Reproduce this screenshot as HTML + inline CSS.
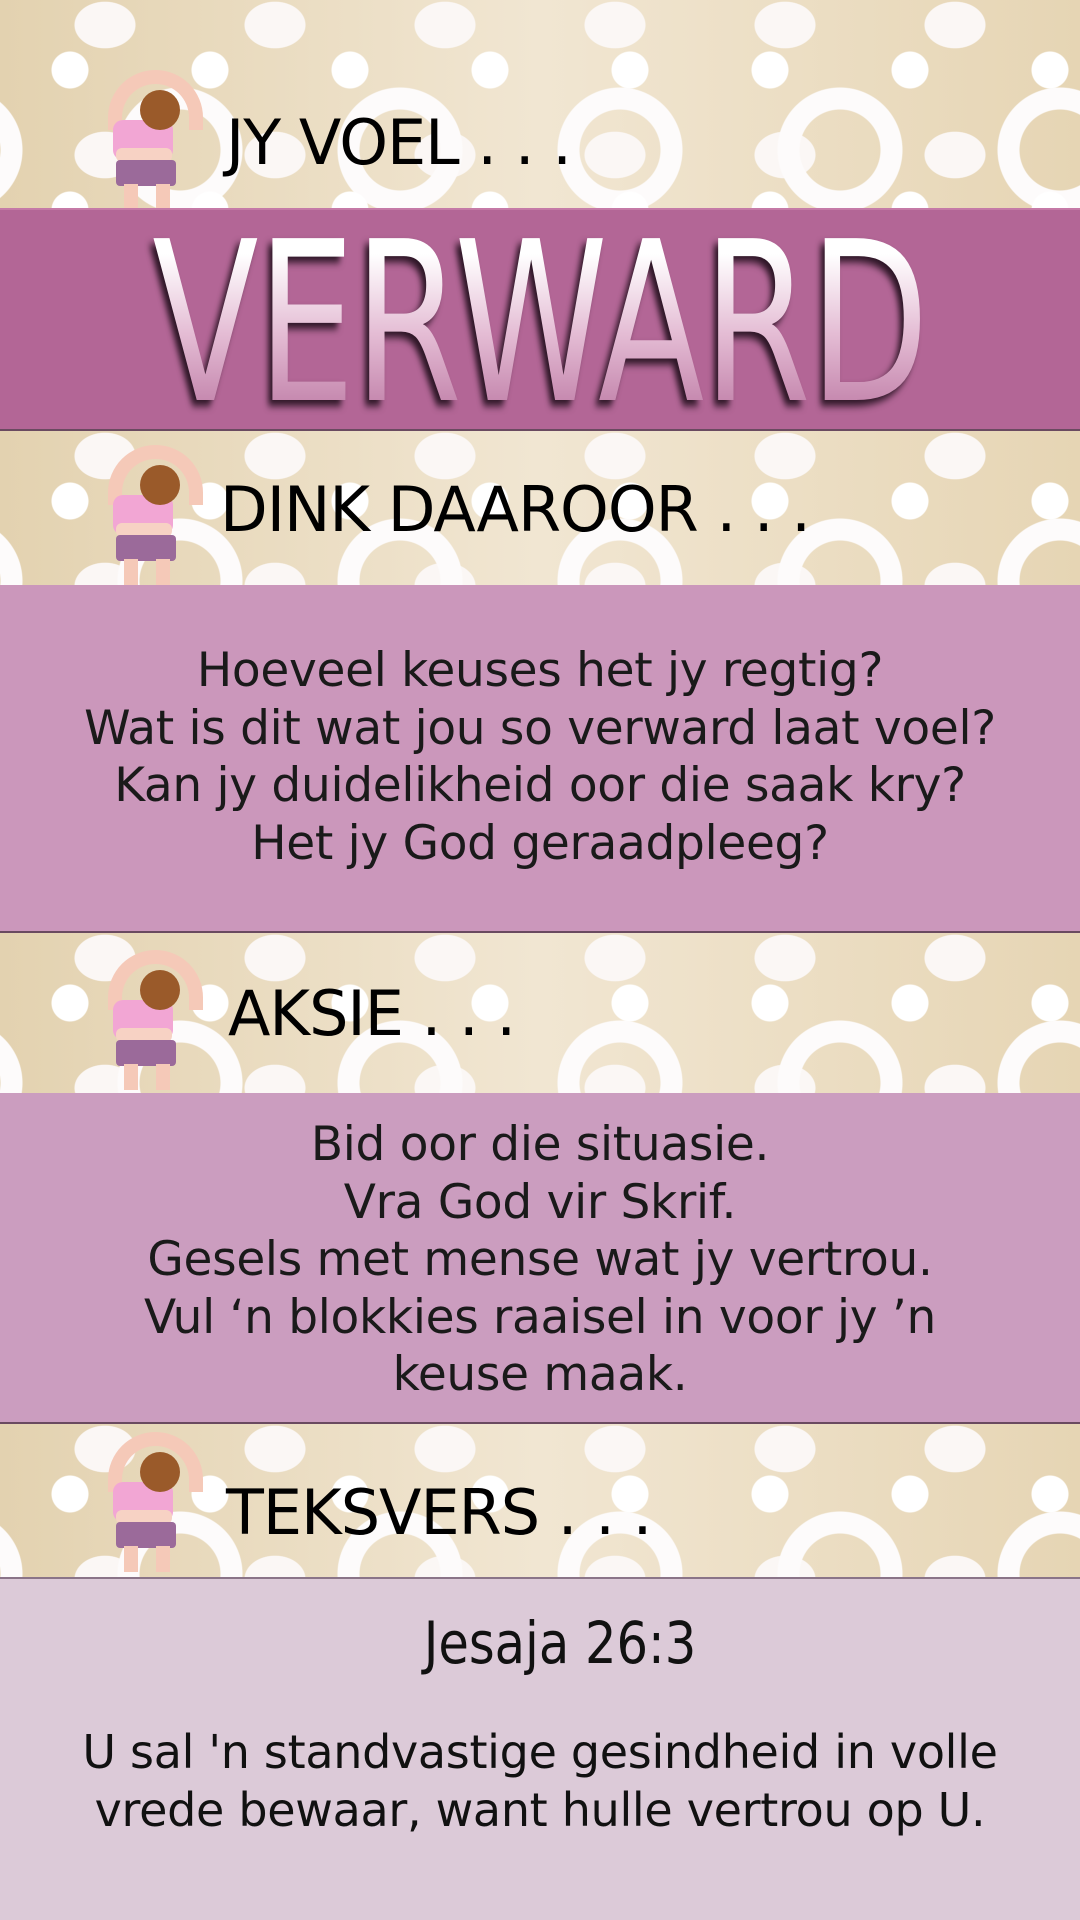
<!DOCTYPE html>
<html><head><meta charset="utf-8"><style>
*{margin:0;padding:0;box-sizing:border-box}
body{width:1080px;height:1920px;overflow:hidden;font-family:"DejaVu Sans","Liberation Sans",sans-serif;color:#111;position:relative;background:#ecdfc5}
.pat{position:absolute;left:0;width:1080px;overflow:hidden;
background:
radial-gradient(circle at 50% 50%, #fff 0 18px, transparent 19px) 0 0/140px 140px,
radial-gradient(circle at 50% 50%, transparent 0 40px, #fdfbfb 41px 62px, transparent 63px) 70px 40px/220px 220px,
radial-gradient(ellipse at 50% 50%, #fbf7f5 0 30px, transparent 31px) 20px 90px/170px 130px,
linear-gradient(90deg,#e3d2b0,#f1e6d2 50%,#e6d5b4);}
.box{position:absolute;left:0;width:1080px;text-align:center;border-bottom:2px solid #6a4a60}
.fig{position:absolute;width:120px;height:140px}
.fig .arm{position:absolute;left:20px;top:0;width:95px;height:60px;border:14px solid #f5c9b8;border-bottom:none;border-radius:60px 60px 0 0}
.fig .head{position:absolute;left:52px;top:20px;width:40px;height:40px;border-radius:50%;background:#9a5a2a}
.fig .body{position:absolute;left:25px;top:50px;width:60px;height:40px;background:#f2a6d4;border-radius:10px}
.fig .belly{position:absolute;left:28px;top:78px;width:56px;height:14px;background:#f7d2c4;border-radius:6px}
.fig .shorts{position:absolute;left:28px;top:90px;width:60px;height:26px;background:#9b6a9a;border-radius:4px}
.fig .leg1,.fig .leg2{position:absolute;top:114px;width:14px;height:26px;background:#f5c9b8}
.fig .leg1{left:36px}.fig .leg2{left:68px}
.fig .tag{position:absolute;left:-2px;top:142px;font-size:14px;color:#8a4f7a;white-space:nowrap;font-family:"Liberation Sans",sans-serif;font-weight:bold}
.h{position:absolute;font-size:62px;letter-spacing:-1px;color:#000;white-space:nowrap}
.t{font-size:47px;line-height:57.5px;letter-spacing:-0.3px;color:#1a1a1a}
.vw{position:absolute;left:0;top:0;width:1080px;height:223px}
.vw span{position:absolute;left:540px;top:14px;display:block;white-space:nowrap;font-size:222px;line-height:200px;padding:0 20px;letter-spacing:-2px;transform:translateX(-50%) scaleX(0.7);
background:linear-gradient(#ffffff 15%,#e4bcd4 55%,#c07fa8 95%);-webkit-background-clip:text;background-clip:text;color:transparent;filter:drop-shadow(-6px 6px 4px #2d1626)}
</style></head><body>
<div class="pat" style="top:0;height:208px"></div>
<div class="fig" style="left:88px;top:70px"><div class="arm"></div><div class="body"></div><div class="head"></div><div class="belly"></div><div class="shorts"></div><div class="leg1"></div><div class="leg2"></div><div class="tag">Koebaai vetnoi !</div></div>
<div class="h" style="left:226px;top:106px">JY VOEL . . .</div>

<div class="box" style="top:208px;height:223px;background:#b36696;border-top:2px solid #c57aa7">
<div class="vw"><span>VERWARD</span></div>
</div>

<div class="pat" style="top:431px;height:154px"></div>
<div class="fig" style="left:88px;top:445px"><div class="arm"></div><div class="body"></div><div class="head"></div><div class="belly"></div><div class="shorts"></div><div class="leg1"></div><div class="leg2"></div><div class="tag">Koebaai vetnoi !</div></div>
<div class="h" style="left:220px;top:473px">DINK DAAROOR . . .</div>

<div class="box t" style="top:585px;height:348px;background:#cb97bb;padding-top:57px">Hoeveel keuses het jy regtig?<br>Wat is dit wat jou so verward laat voel?<br>Kan jy duidelikheid oor die saak kry?<br>Het jy God geraadpleeg?</div>

<div class="pat" style="top:933px;height:160px"></div>
<div class="fig" style="left:88px;top:950px"><div class="arm"></div><div class="body"></div><div class="head"></div><div class="belly"></div><div class="shorts"></div><div class="leg1"></div><div class="leg2"></div><div class="tag">Koebaai vetnoi !</div></div>
<div class="h" style="left:228px;top:977px">AKSIE . . .</div>

<div class="box t" style="top:1093px;height:331px;background:#cb9dbf;padding-top:23px">Bid oor die situasie.<br>Vra God vir Skrif.<br>Gesels met mense wat jy vertrou.<br>Vul ‘n blokkies raaisel in voor jy ’n<br>keuse maak.</div>

<div class="pat" style="top:1424px;height:153px"></div>
<div class="fig" style="left:88px;top:1432px"><div class="arm"></div><div class="body"></div><div class="head"></div><div class="belly"></div><div class="shorts"></div><div class="leg1"></div><div class="leg2"></div><div class="tag">Koebaai vetnoi !</div></div>
<div class="h" style="left:226px;top:1476px">TEKSVERS . . .</div>

<div class="box" style="top:1577px;height:343px;background:#dccad8;border-bottom:none;border-top:2px solid #8a7488">
<div style="position:absolute;left:0;width:1120px;top:30px;font-size:58px;transform:scaleX(0.95);font-family:'DejaVu Sans Condensed','DejaVu Sans',sans-serif">Jesaja 26:3</div>
<div style="position:absolute;left:0;width:1080px;top:144px;font-size:46px;line-height:58px;letter-spacing:-0.3px">U sal 'n standvastige gesindheid in volle<br>vrede bewaar, want hulle vertrou op U.</div>
</div>
</body></html>
